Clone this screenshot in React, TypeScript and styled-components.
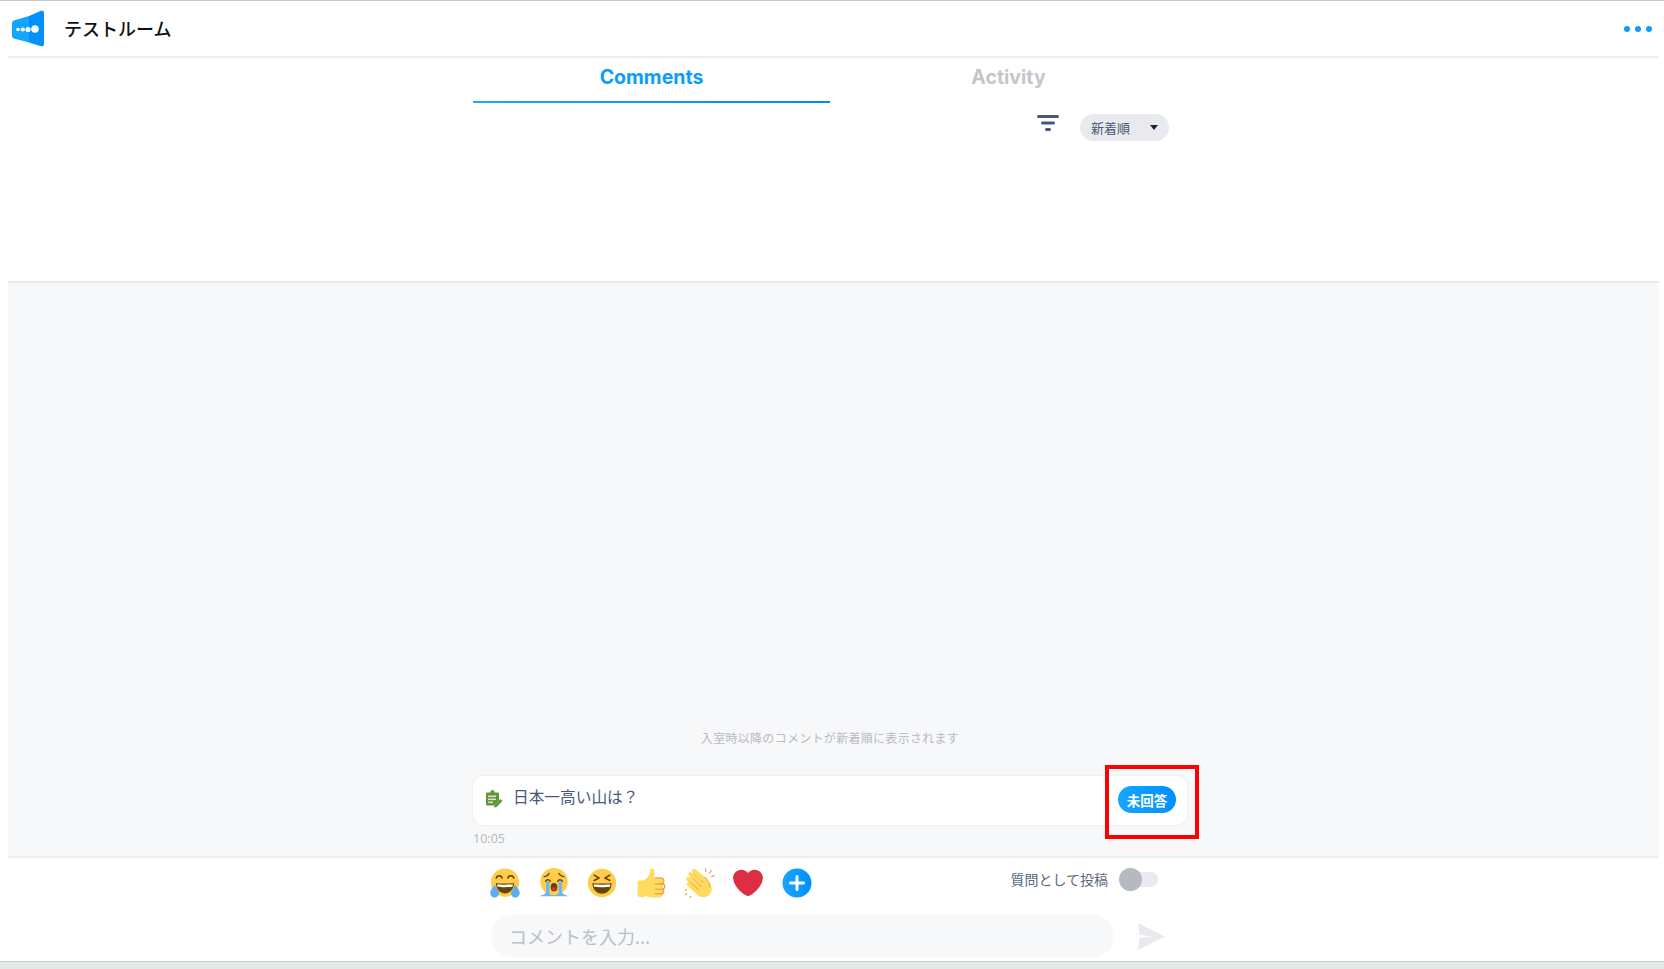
import React from 'react';
import styled, { createGlobalStyle } from 'styled-components';

const GlobalStyle = createGlobalStyle`
  html, body {
    margin: 0;
    padding: 0;
    background: #fff;
    overflow: hidden;
  }
  body {
    font-family: "Noto Sans CJK JP", "Noto Sans", sans-serif;
  }
`;

const Page = styled.div`
  height: 969px;
  display: flex;
  flex-direction: column;
  border-top: 1px solid #c9c9c9;
  box-sizing: border-box;
`;

const Shell = styled.div`
  flex: 1;
  min-height: 0;
  margin: 0 5px 0 8px;
  display: flex;
  flex-direction: column;
`;

const Header = styled.header`
  height: 55px;
  flex: none;
  display: flex;
  align-items: center;
  justify-content: space-between;
  border-bottom: 2px solid #eeeeee;
  box-sizing: content-box;
  padding: 0 7px 0 4px;
  margin-bottom: -1px;
`;

const Brand = styled.div`
  display: flex;
  align-items: center;
  gap: 20px;
`;

const RoomName = styled.h1`
  margin: 0 0 2px;
  font-size: 18px;
  font-weight: 500;
  color: #111;
`;

const MoreDots = styled.div`
  display: flex;
  gap: 5px;
  span {
    width: 6px;
    height: 6px;
    border-radius: 50%;
    background: #0a9dff;
  }
`;

const TopPanel = styled.section`
  height: 225px;
  flex: none;
  padding-left: 465px;
  border-bottom: 1px solid #e6e6e6;
  box-sizing: border-box;
  box-shadow: 0 2px 2px -1px rgba(0, 0, 0, 0.06);
  position: relative;
`;

const Column = styled.div`
  width: 714px;
`;

const Tabs = styled.div`
  display: grid;
  grid-template-columns: 1fr 1fr;
`;

const Tab = styled.div<{ $active?: boolean }>`
  height: 46px;
  box-sizing: border-box;
  padding-top: 4px;
  text-align: center;
  font-family: Inter, "Noto Sans", sans-serif;
  font-size: 19.5px;
  font-weight: 700;
  line-height: 32px;
  color: ${p => (p.$active ? '#0a9dff' : '#c4c6c9')};
  border-bottom: 2px solid transparent;
  border-image: ${p => (p.$active ? 'linear-gradient(90deg, #1aa8ff, #0088ff) 1' : 'none')};
`;

const SortRow = styled.div`
  display: flex;
  justify-content: flex-end;
  align-items: flex-start;
  gap: 21px;
  margin-top: 11px;
  padding-right: 18px;
  svg {
    margin-top: 1px;
  }
`;

const SortSelect = styled.div`
  width: 89px;
  height: 27px;
  box-sizing: border-box;
  padding: 0 11px 0 11px;
  border-radius: 14px;
  background: #e9eaef;
  display: flex;
  align-items: center;
  justify-content: space-between;
  font-size: 13px;
  color: #47577a;
`;

const Caret = styled.span`
  width: 0;
  height: 0;
  border-left: 4.5px solid transparent;
  border-right: 4.5px solid transparent;
  border-top: 5px solid #1c2333;
`;

const Feed = styled.main`
  flex: 1;
  min-height: 0;
  background: #f7f8fa;
  padding-left: 465px;
  display: flex;
  flex-direction: column;
  justify-content: flex-end;
`;

const Notice = styled.p`
  width: 714px;
  margin: 0 0 29px;
  text-align: center;
  font-size: 12px;
  letter-spacing: 0.3px;
  line-height: 18px;
  color: #b9bbbe;
`;

const QuestionCard = styled.article`
  position: relative;
  width: 714px;
  height: 49px;
  box-sizing: border-box;
  padding: 0 11px 0 12px;
  background: #fff;
  border-radius: 11px;
  box-shadow: 0 0 3px rgba(0, 0, 0, 0.08);
  display: flex;
  align-items: center;
  gap: 10px;
`;

const QuestionText = styled.span`
  flex: 1;
  font-size: 15.7px;
  color: #47577a;
  position: relative;
  top: -4px;
`;

const StatusBadge = styled.span`
  width: 58px;
  height: 27px;
  border-radius: 14px;
  background: linear-gradient(90deg, #18a6ff, #0090ff);
  color: #fff;
  font-size: 13.5px;
  font-weight: 700;
  display: flex;
  align-items: center;
  justify-content: center;
  position: relative;
  top: -1px;
`;

const Highlight = styled.div`
  position: absolute;
  left: 632px;
  top: -11px;
  width: 94px;
  height: 74px;
  box-sizing: border-box;
  border: 4px solid #f00;
  pointer-events: none;
`;

const Time = styled.time`
  display: block;
  height: 31px;
  font-family: "Noto Sans", sans-serif;
  font-size: 12.5px;
  line-height: 28px;
  color: #b9bbbe;
`;

const Composer = styled.footer`
  height: 105px;
  flex: none;
  border-top: 2px solid #eeeeee;
  box-sizing: border-box;
  padding-left: 465px;
`;

const ComposerInner = styled.div`
  width: 714px;
`;

const ReactionRow = styled.div`
  height: 50px;
  display: flex;
  align-items: center;
  justify-content: space-between;
  padding: 0 29px 0 17px;
  margin-bottom: 7px;
`;

const Reactions = styled.div`
  display: flex;
  gap: 18.7px;
  svg {
    display: block;
    width: 30px;
    height: 30px;
  }
`;

const PostAsQuestion = styled.label`
  display: flex;
  align-items: center;
  gap: 12px;
  font-size: 14px;
  color: #5a6780;
  position: relative;
  top: -4px;
`;

const ToggleTrack = styled.span`
  position: relative;
  width: 38px;
  height: 15px;
  border-radius: 8px;
  background: #e9eaef;
`;

const ToggleKnob = styled.span`
  position: absolute;
  left: -1px;
  top: -4px;
  width: 23px;
  height: 23px;
  border-radius: 50%;
  background: #b6b9be;
`;

const InputRow = styled.div`
  display: flex;
  align-items: center;
  gap: 24px;
  padding-left: 18px;
`;

const CommentInput = styled.input`
  width: 623px;
  height: 42px;
  box-sizing: border-box;
  padding: 0 18px;
  border: 0;
  outline: 0;
  border-radius: 21px;
  background: #f7f8fa;
  font-family: inherit;
  font-size: 18px;
  &::placeholder {
    color: #bcbfc4;
    opacity: 1;
  }
`;

const BottomStrip = styled.div`
  height: 7px;
  flex: none;
  background: #e2eaea;
  border-top: 1px solid #c9c9c9;
`;

const Logo = () => (
  <svg width="32" height="37" viewBox="0 0 32 37">
    <path d="M17 6 L29 .8 Q32 0 32 3 L32 34 Q32 37 29 36.200 L17 32.500 Z" fill="#0090ff" />
    <path d="M2 10.500 L17 6 L17 32.500 L2 28.500 Q0 28 0 26 L0 13 Q0 11 2 10.500 Z" fill="#14a5ff" />
    <circle cx="6" cy="19.500" r="1.800" fill="#fff" />
    <circle cx="10.800" cy="19.500" r="2.100" fill="#fff" />
    <circle cx="16" cy="19.500" r="2.600" fill="#fff" />
    <circle cx="23" cy="19" r="3.800" fill="#fff" />
  </svg>
);

const FilterIcon = () => (
  <svg width="22" height="16" viewBox="0 0 22 16">
    <rect x="0" y="0" width="22" height="3" rx="1.500" fill="#47577a" />
    <rect x="4" y="6.500" width="14" height="3" rx="1.500" fill="#47577a" />
    <rect x="8" y="13" width="6" height="3" rx="1.500" fill="#47577a" />
  </svg>
);

const ClipboardIcon = () => (
  <svg width="18" height="18" viewBox="0 0 18 18" style={{ flex: 'none', position: 'relative', top: -2 }}>
    <path d="M2.500 2.500h3V1.800C5.500 .8 6.300 0 7.500 0s2 .8 2 1.800v.7h3c1 0 1.500.6 1.500 1.500v6.500L9 15.500H2.500C1.500 15.500 1 15 1 14V4c0-.9.600-1.500 1.500-1.500z" fill="#5e9732" />
    <rect x="3" y="5.500" width="8" height="1.600" fill="#d9d9d9" />
    <rect x="3" y="8.500" width="8" height="1.600" fill="#d9d9d9" />
    <rect x="3" y="11.500" width="5" height="1.600" fill="#d9d9d9" />
    <path d="M9.500 15l6-6 2 2-6 6-2.500.500z" fill="#5e9732" />
  </svg>
);

const JoyEmoji = () => (
  <svg viewBox="0 0 36 36">
    <circle cx="18" cy="17.500" r="17" fill="#FFCC4D" />
    <path d="M7 18c0 7 5 12.500 11 12.500S29 25 29 18c-3 .900-19 .900-22 0z" fill="#664500" />
    <path d="M8.500 19.500c4 .700 15 .700 19 0l-.500 3c-4 .700-14 .700-18 0z" fill="#fff" />
    <path d="M7.500 12c1-3.500 6-3.500 7 0M21.500 12c1-3.500 6-3.500 7 0" stroke="#664500" strokeWidth="1.900" strokeLinecap="round" fill="none" />
    <path d="M5.500 20C4 23 .3 26 .3 30c0 3 2.500 5.500 5.200 5.500S11 33 11 30c0-3.500-4.500-6.500-5.500-10z" fill="#5DADEC" />
    <path d="M30.500 20c1.500 3 5.200 6 5.200 10 0 3-2.500 5.500-5.200 5.500S25 33 25 30c0-3.500 4.500-6.500 5.500-10z" fill="#5DADEC" />
  </svg>
);

const SobEmoji = () => (
  <svg viewBox="0 0 36 36">
    <circle cx="18" cy="16.500" r="16.500" fill="#FFCC4D" />
    <path d="M6 10.500c2-.500 5-1.500 6-4M30 10.500c-2-.500-5-1.500-6-4" stroke="#664500" strokeWidth="1.500" strokeLinecap="round" fill="none" />
    <path d="M8 16c1.200-2.500 4-2.500 5.500 0M22.500 16c1.200-2.500 4-2.500 5.500 0" stroke="#664500" strokeWidth="1.800" strokeLinecap="round" fill="none" />
    <ellipse cx="18" cy="23" rx="4" ry="5" fill="#664500" />
    <circle cx="18" cy="25" r="2.300" fill="#DD2E44" />
    <path d="M8.500 16.500h4V30c0 1.500 1.500 2.500 5.500 2.500V34H0v-.5c1 0 3-.500 5-1.500 2.500-1 3.500-2 3.500-4zM23.500 16.500h4V28c0 2 1 3 3.500 4 2 1 4 1.500 5 1.500v.5H18v-1.500c4 0 5.500-1 5.500-2.500z" fill="#6cb6ec" />
  </svg>
);

const LaughEmoji = () => (
  <svg viewBox="0 0 36 36">
    <circle cx="18" cy="18" r="17" fill="#FFCC4D" />
    <path d="M6.500 18c0 7.500 5 13 11.500 13s11.500-5.500 11.500-13c-3 .900-20 .900-23 0z" fill="#664500" />
    <path d="M8 19.500c4 .700 16 .700 20 0l-.500 3c-4 .700-15 .700-19 0z" fill="#fff" />
    <path d="M8.500 8.500l6 3.500-6 3M27.500 8.500l-6 3.500 6 3" stroke="#664500" strokeWidth="1.800" strokeLinecap="round" strokeLinejoin="round" fill="none" />
  </svg>
);

const ThumbsUpEmoji = () => (
  <svg viewBox="0 0 36 36">
    <path d="M33 15c0-2-1.500-3.500-3.500-3.500H21c1-3 1.500-5.500 1-8C21.500 1 20 0 18.500.5 17 1 17 2.500 17 4c0 4-4 9-8 11v17c3 2 7 3.500 11 3.500h7.500c2.500 0 5-1 5-4z" fill="#FFDB5E" />
    <rect x="2" y="15" width="9" height="20" rx="2.500" fill="#FFDB5E" />
    <path d="M23 12h7c2 0 3.500 1.500 3.500 3.500S32 19 30 19h-7M23 19h8.500c1.700 0 3 1.500 3 3.300s-1.300 3.200-3 3.200H23M23 25.500h7.500c1.700 0 2.800 1.300 2.800 2.800S32.200 31 30.500 31H23" stroke="#EE9547" strokeWidth="1.300" fill="none" strokeLinecap="round" />
  </svg>
);

const ClapEmoji = () => (
  <svg viewBox="0 0 36 36">
    <g stroke="#FFDC5D" strokeWidth="5" strokeLinecap="round">
      <path d="M11 3.500l14 12" />
      <path d="M6.500 7.500l15 13" />
      <path d="M4 13l14 12" />
      <path d="M4.500 19.500l10 9" />
    </g>
    <path d="M24 11c3.500 3.500 8 8.500 8 14.500 0 5.500-4.500 9.500-9.500 9.500-4 0-7-1.500-9.500-4.500L9 24z" fill="#FFDC5D" />
    <path d="M10 6.500l12 10.500M7 11l13 11.500M5.500 16.500l11 10M24 11c2.500 2.500 6 7 6 12" stroke="#EE9547" strokeWidth="1" fill="none" strokeLinecap="round" />
    <path d="M25 4l-.500-3M29.500 6l2-3M32 10.500l3-1.500M1.500 26l-1.500 1M2 31l-2 1.500M7 34l-1 2" stroke="#EE9547" strokeWidth="1.400" strokeLinecap="round" />
  </svg>
);

const HeartEmoji = () => (
  <svg viewBox="0 0 36 36">
    <path d="M35.885 11.833c0-5.450-4.418-9.868-9.867-9.868-3.308 0-6.227 1.633-8.018 4.129-1.791-2.496-4.710-4.129-8.017-4.129-5.450 0-9.868 4.417-9.868 9.868 0 .772.098 1.520.266 2.241C1.751 22.587 11.216 31.568 18 34.034c6.783-2.466 16.249-11.447 17.617-19.959.170-.721.268-1.469.268-2.242z" fill="#DD2E44" />
  </svg>
);

const AddReactionIcon = () => (
  <svg viewBox="0 0 30 30">
    <defs>
      <linearGradient id="plusFill" x1="0" y1="0" x2="1" y2="0">
        <stop offset="0" stopColor="#18a6ff" />
        <stop offset="1" stopColor="#0090ff" />
      </linearGradient>
    </defs>
    <circle cx="15" cy="15" r="14.500" fill="url(#plusFill)" />
    <path d="M15 8.500v13M8.500 15h13" stroke="#fff" strokeWidth="3" strokeLinecap="round" />
  </svg>
);

const SendIcon = () => (
  <svg width="27" height="27" viewBox="0 0 27 27" style={{ flex: 'none' }}>
    <path d="M0 0 L27 13.500 L0 27 L1.500 15 L15 13.500 L1.500 12 Z" fill="#e9eaef" />
  </svg>
);

const App: React.FC = () => {
  return (
    <>
      <GlobalStyle />
      <Page>
        <Shell>
          <Header>
            <Brand>
              <Logo />
              <RoomName>テストルーム</RoomName>
            </Brand>
            <MoreDots>
              <span />
              <span />
              <span />
            </MoreDots>
          </Header>

          <TopPanel>
            <Column>
              <Tabs>
                <Tab $active>Comments</Tab>
                <Tab>Activity</Tab>
              </Tabs>
              <SortRow>
                <FilterIcon />
                <SortSelect>
                  新着順
                  <Caret />
                </SortSelect>
              </SortRow>
            </Column>
          </TopPanel>

          <Feed>
            <Notice>入室時以降のコメントが新着順に表示されます</Notice>
            <QuestionCard>
              <ClipboardIcon />
              <QuestionText>日本一高い山は？</QuestionText>
              <StatusBadge>未回答</StatusBadge>
              <Highlight />
            </QuestionCard>
            <Time>10:05</Time>
          </Feed>

          <Composer>
            <ComposerInner>
              <ReactionRow>
                <Reactions>
                  <JoyEmoji />
                  <SobEmoji />
                  <LaughEmoji />
                  <ThumbsUpEmoji />
                  <ClapEmoji />
                  <HeartEmoji />
                  <AddReactionIcon />
                </Reactions>
                <PostAsQuestion>
                  質問として投稿
                  <ToggleTrack>
                    <ToggleKnob />
                  </ToggleTrack>
                </PostAsQuestion>
              </ReactionRow>
              <InputRow>
                <CommentInput placeholder="コメントを入力..." />
                <SendIcon />
              </InputRow>
            </ComposerInner>
          </Composer>
        </Shell>
        <BottomStrip />
      </Page>
    </>
  );
};

export default App;
